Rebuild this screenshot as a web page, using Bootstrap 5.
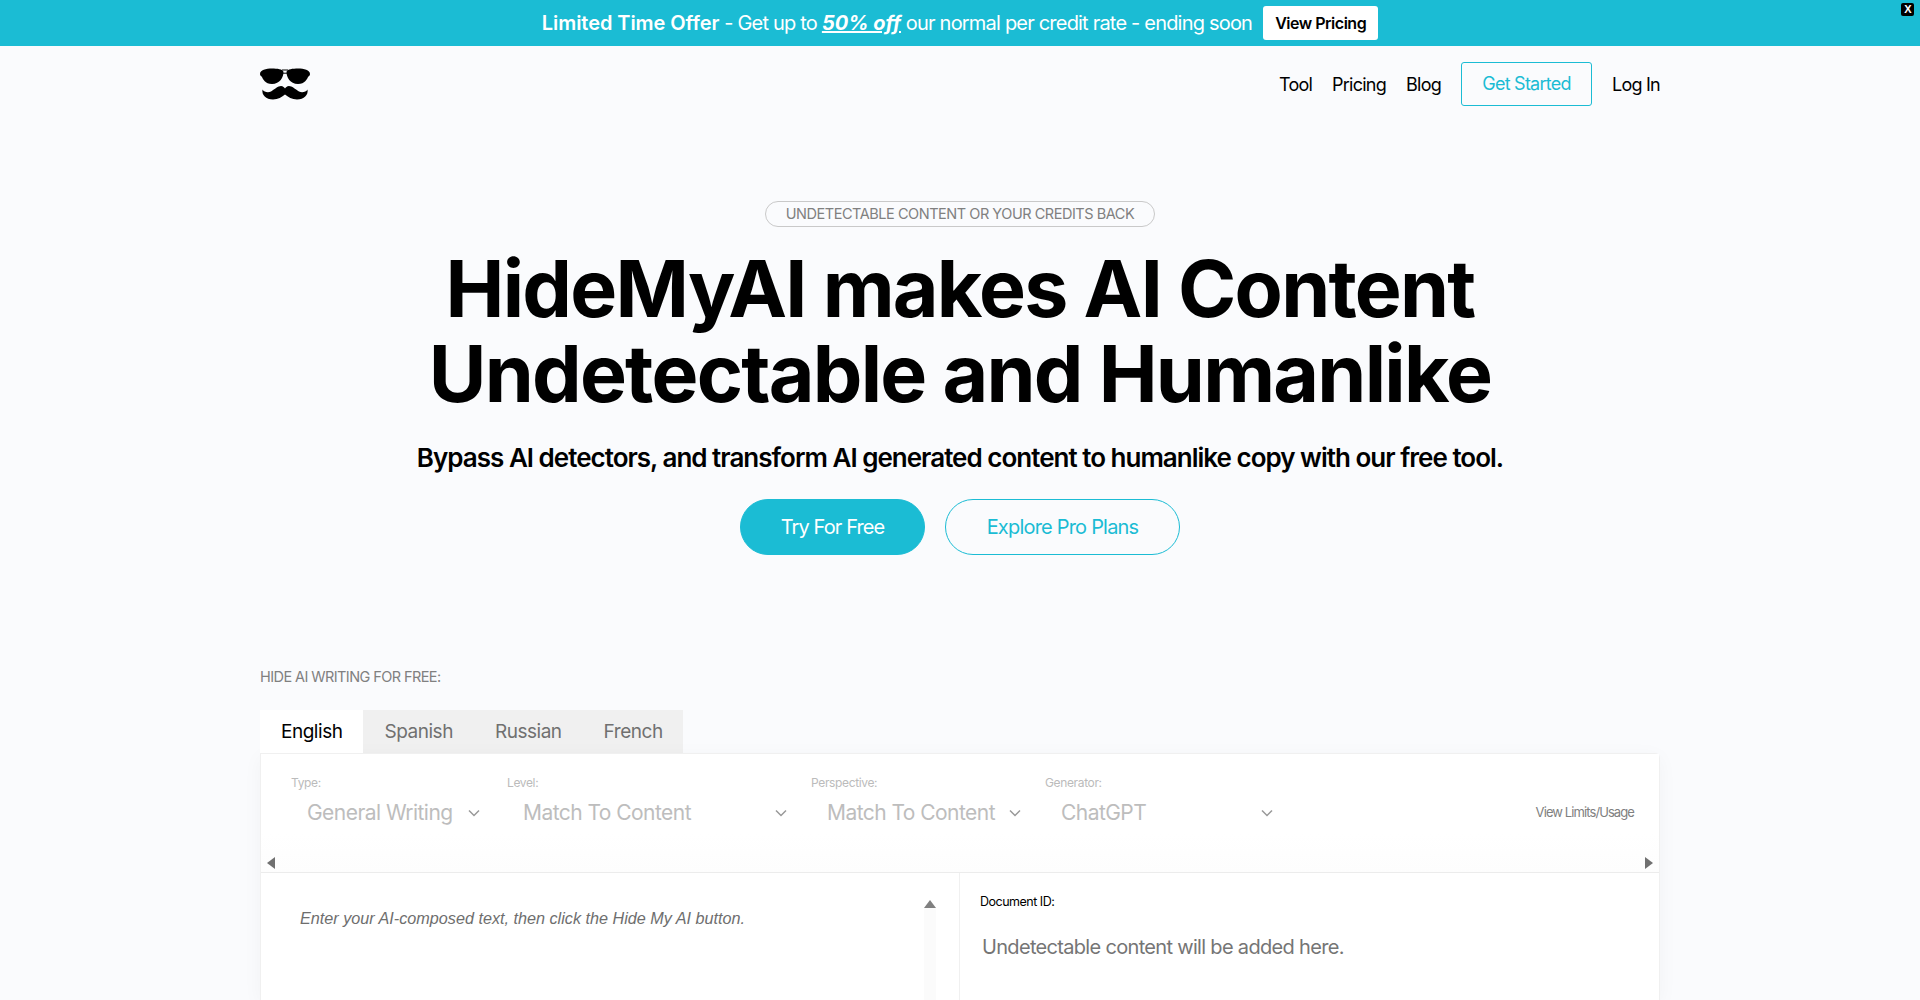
<!DOCTYPE html>
<html lang="en">
<head>
<meta charset="utf-8">
<title>HideMyAI</title>
<link href="https://cdn.jsdelivr.net/npm/bootstrap@5.3.0/dist/css/bootstrap.min.css" rel="stylesheet">
<style>
html,body{height:1000px;overflow:hidden}
body{font-family:Inter,"Liberation Sans",sans-serif;background:#fafbfd;color:#000;letter-spacing:-.02em}
.promo{height:46px;background:#1bbcd4;color:#fff;font-size:20px;letter-spacing:-.04em;position:relative}
.promo strong{font-weight:600;letter-spacing:-.003em}
.promo em{font-weight:700;text-decoration:underline;letter-spacing:0}
.promo-btn{background:#fff;color:#000;font-size:16px;font-weight:600;border-radius:3px;padding:0 12px;height:34px;line-height:34px;margin-left:11px;text-decoration:none;border:0;letter-spacing:-.03em}
.promo-x{position:absolute;top:3px;right:6px;width:13px;height:13px;background:#000;color:#fff;font-size:11px;font-weight:700;line-height:13px;text-align:center;border-radius:2px;font-family:"Liberation Sans",sans-serif}
.wrap{width:1400px;margin:0 auto}
.topnav{height:76px}
.topnav a{color:#000;text-decoration:none;font-size:18px;letter-spacing:-.042em}
.topnav a.getstart{color:#1bbcd4;border:1px solid #1bbcd4;border-radius:3px;width:131px;height:44px;line-height:42px;text-align:center}
.hero{padding-top:79px}
.pill-tag{display:inline-block;border:1px solid #c9c9c9;border-radius:14px;font-size:14.5px;letter-spacing:-.032em;color:#808080;height:26px;line-height:24px;padding:0 20px}
.hero h1{font-size:78.8px;font-weight:700;line-height:84.5px;letter-spacing:-.022em;margin:20px 0 0}
.subline{font-size:26px;font-weight:600;line-height:32px;letter-spacing:-.038em;margin:26px 0 0}
.cta{height:56px;border-radius:28px;font-size:20px;line-height:54px;padding:0;border:1px solid #1bbcd4;letter-spacing:-.045em}
.cta-a{width:185px;background:#1bbcd4;color:#fff}
.cta-b{width:235px;color:#1bbcd4;background:transparent;letter-spacing:-.04em}
.cta-row{margin-top:25px;gap:20px}
.hide-label{font-size:14.5px;letter-spacing:-.04em;color:#808080;margin-top:113px;line-height:17px}
.langtabs{margin-top:25px;width:423px;height:43px;background:#f0f0f0;font-size:19px;letter-spacing:-.025em;color:#707070}
.langtabs span{line-height:43px;padding:0 21px}
.langtabs .on{background:#fff;color:#000}
.panel{background:#fff;border:1px solid #f0f0f0;border-bottom:0;border-radius:0 5px 0 0;box-shadow:0 4px 20px rgba(0,0,0,.04);height:247px}
.tools{height:119px;position:relative;border-bottom:1px solid #ececec;background:linear-gradient(#fff 80px,#fdfdfd)}
.tool{position:absolute;top:21px}
.tool label{display:block;font-size:12px;letter-spacing:-.03em;color:#bbb;line-height:15px;margin:0 0 0 1px}
.tool div{display:flex;justify-content:space-between;align-items:center;font-size:21px;color:#bdbdbd;margin:9px 0 0 17px;line-height:28px;letter-spacing:-.026em}
.limits{position:absolute;top:49px;right:25px;font-size:13px;letter-spacing:-.07em;color:#808080}
.arrow{position:absolute}
.panes{height:127px}
.pane-l{width:699px;border-right:1px solid #f0f0f0;position:relative;padding:33px 0 0 39px;font-family:"Liberation Sans",sans-serif;font-style:italic;font-size:16.2px;color:#6e6e6e;letter-spacing:0}
.scroll-track{position:absolute;top:34px;right:23px;bottom:0;width:12px;background:#fbfbfb}
.pane-r{padding:21px 0 0 20px}
.docid{font-size:12.5px;line-height:16px;letter-spacing:-.04em}
.outnote{font-size:20px;color:#757575;margin:23px 0 0 2px;line-height:28px;letter-spacing:-.034em}
</style>
</head>
<body>
<div class="promo d-flex align-items-center justify-content-center">
  <span><strong>Limited Time Offer</strong> - Get up to <em>50% off</em> our normal per credit rate - ending soon</span>
  <a class="promo-btn" href="#">View Pricing</a>
  <span class="promo-x">X</span>
</div>
<div class="wrap">
  <nav class="topnav d-flex align-items-center justify-content-between">
    <svg width="50" height="34" viewBox="0 0 50 34" aria-label="HideMyAI logo">
      <path d="M0 7C0 3 6 1.500 12 1.500C17 1.500 23 2 23.500 5C23.500 10 20 17 12 17C5 17 3 12 2 10C1 9 0 8.500 0 7z" fill="#000"/>
      <path d="M50 7C50 3 44 1.500 38 1.500C33 1.500 27 2 26.500 5C26.500 10 30 17 38 17C45 17 47 12 48 10C49 9 50 8.500 50 7z" fill="#000"/>
      <path d="M22 3h6M22 6.200h6" stroke="#000" stroke-width="1" fill="none"/>
      <path d="M2.500 22.500C4 25 8 26 11 24.500C15 22 18 19 21 19C23 19 24.500 20.500 25 21.500C25.500 20.500 27 19 29 19C32 19 35 22 39 24.500C42 26 46 25 47.500 22.500C48.500 28 44 32.500 37 32.500C32 32.500 28 30 25 27.500C22 30 18 32.500 13 32.500C6 32.500 1.500 28 2.500 22.500z" fill="#000"/>
    </svg>
    <div class="d-flex align-items-center" style="gap:20px">
      <a href="#">Tool</a><a href="#">Pricing</a><a href="#">Blog</a>
      <a href="#" class="getstart">Get Started</a>
      <a href="#">Log In</a>
    </div>
  </nav>
  <section class="hero text-center">
    <span class="pill-tag">UNDETECTABLE CONTENT OR YOUR CREDITS BACK</span>
    <h1>HideMyAI makes AI Content<br>Undetectable and Humanlike</h1>
    <p class="subline">Bypass AI detectors, and transform AI generated content to humanlike copy with our free tool.</p>
    <div class="d-flex justify-content-center cta-row">
      <a href="#" class="btn cta cta-a">Try For Free</a>
      <a href="#" class="btn cta cta-b">Explore Pro Plans</a>
    </div>
  </section>
  <div class="hide-label">HIDE AI WRITING FOR FREE:</div>
  <div class="langtabs d-flex">
    <span class="on">English</span><span>Spanish</span><span>Russian</span><span>French</span>
  </div>
  <div class="panel">
    <div class="tools">
      <div class="tool" style="left:29px;width:190px"><label>Type:</label><div>General Writing<svg width="12" height="8" viewBox="0 0 12 8"><path d="M1 1.500l5 5 5-5" fill="none" stroke="#999" stroke-width="1.500"/></svg></div></div>
      <div class="tool" style="left:245px;width:281px"><label>Level:</label><div>Match To Content<svg width="12" height="8" viewBox="0 0 12 8"><path d="M1 1.500l5 5 5-5" fill="none" stroke="#999" stroke-width="1.500"/></svg></div></div>
      <div class="tool" style="left:549px;width:211px"><label>Perspective:</label><div>Match To Content<svg width="12" height="8" viewBox="0 0 12 8"><path d="M1 1.500l5 5 5-5" fill="none" stroke="#999" stroke-width="1.500"/></svg></div></div>
      <div class="tool" style="left:783px;width:229px"><label>Generator:</label><div>ChatGPT<svg width="12" height="8" viewBox="0 0 12 8"><path d="M1 1.500l5 5 5-5" fill="none" stroke="#999" stroke-width="1.500"/></svg></div></div>
      <span class="limits">View Limits/Usage</span>
      <svg class="arrow" style="left:5px;top:103px" width="10" height="12" viewBox="0 0 10 12"><path d="M9 0v12L1 6z" fill="#707070"/></svg>
      <svg class="arrow" style="right:5px;top:103px" width="10" height="12" viewBox="0 0 10 12"><path d="M1 0v12l8-6z" fill="#707070"/></svg>
    </div>
    <div class="panes d-flex">
      <div class="pane-l">Enter your AI-composed text, then click the Hide My AI button.
        <div class="scroll-track"></div>
        <svg class="arrow" style="right:23px;top:26px" width="12" height="10" viewBox="0 0 12 10"><path d="M6 1l6 8H0z" fill="#808080"/></svg>
      </div>
      <div class="pane-r">
        <div class="docid">Document ID:</div>
        <div class="outnote">Undetectable content will be added here.</div>
      </div>
    </div>
  </div>
</div>
<script src="https://cdn.jsdelivr.net/npm/bootstrap@5.3.0/dist/js/bootstrap.bundle.min.js"></script>
</body>
</html>
